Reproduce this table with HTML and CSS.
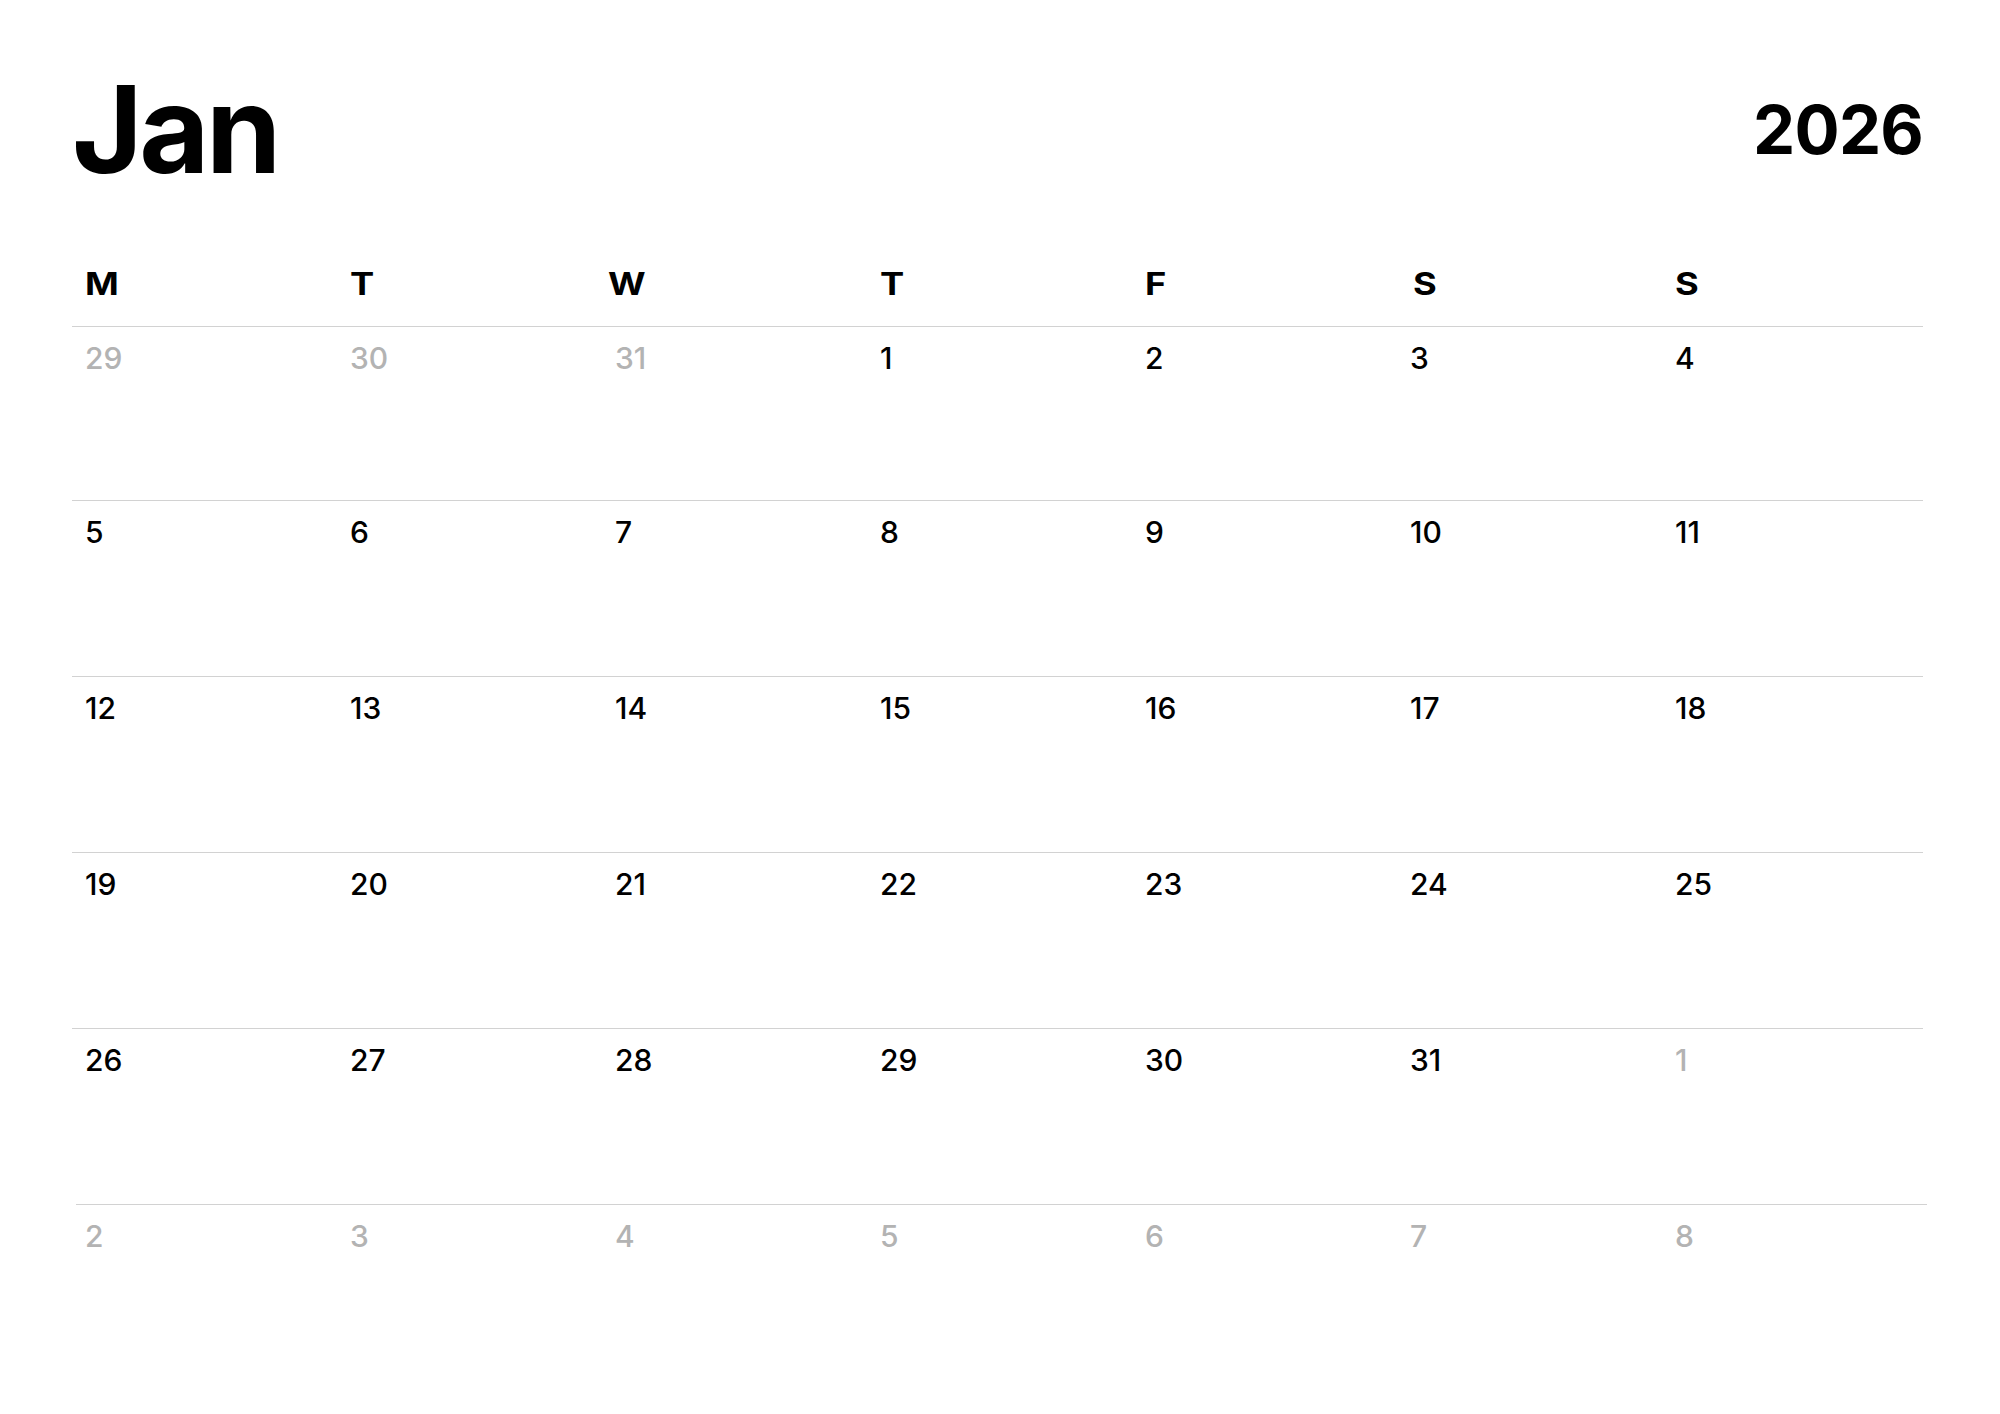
FILE: index.html
```html
<!DOCTYPE html>
<html lang="en">
<head>
<meta charset="utf-8">
<title>Jan 2026</title>
<link rel="stylesheet" href="styles.css">
</head>
<body>
<main class="page">
  <header class="top">
    <h1 class="month">Jan</h1>
    <div class="year">2026</div>
  </header>
  <div class="weekdays">
    <div class="wd"><span>M</span></div><div class="wd"><span>T</span></div><div class="wd nudge-left"><span>W</span></div><div class="wd"><span>T</span></div><div class="wd"><span>F</span></div><div class="wd nudge-right"><span>S</span></div><div class="wd"><span>S</span></div>
  </div>
  <div class="week first">
    <div class="day muted">29</div><div class="day muted">30</div><div class="day muted">31</div><div class="day">1</div><div class="day">2</div><div class="day">3</div><div class="day">4</div>
  </div>
  <div class="week">
    <div class="day">5</div><div class="day">6</div><div class="day">7</div><div class="day">8</div><div class="day">9</div><div class="day">10</div><div class="day">11</div>
  </div>
  <div class="week">
    <div class="day">12</div><div class="day">13</div><div class="day">14</div><div class="day">15</div><div class="day">16</div><div class="day">17</div><div class="day">18</div>
  </div>
  <div class="week">
    <div class="day">19</div><div class="day">20</div><div class="day">21</div><div class="day">22</div><div class="day">23</div><div class="day">24</div><div class="day">25</div>
  </div>
  <div class="week shifted">
    <div class="day">26</div><div class="day">27</div><div class="day">28</div><div class="day">29</div><div class="day">30</div><div class="day">31</div><div class="day muted">1</div>
  </div>
  <div class="week last">
    <div class="day muted">2</div><div class="day muted">3</div><div class="day muted">4</div><div class="day muted">5</div><div class="day muted">6</div><div class="day muted">7</div><div class="day muted">8</div>
  </div>
</main>
</body>
</html>
```

FILE: styles.css
```css
html, body {
  margin: 0;
  padding: 0;
  background: #ffffff;
}

body {
  font-family: Inter, "Liberation Sans", sans-serif;
  color: #000000;
  width: 2000px;
  height: 1414px;
  overflow: hidden;
}

.page {
  width: 1851px;
  padding: 69px 0 0 72px;
}

.top {
  display: flex;
  justify-content: space-between;
  align-items: flex-start;
}

.month {
  margin: 0;
  font-size: 121px;
  line-height: 1;
  font-weight: 700;
  letter-spacing: -3.5px;
}

.year {
  margin-top: 27px;
  font-size: 67px;
  line-height: 1;
  font-weight: 700;
  letter-spacing: -0.8px;
}

.weekdays {
  display: grid;
  grid-template-columns: repeat(7, 265px);
  margin-top: 78px;
  padding-bottom: 27px;
  border-bottom: 1px solid #d2d2d2;
}

.wd {
  padding-left: 13px;
  font-size: 31px;
  line-height: 1;
  font-weight: 700;
}

.wd span {
  display: inline-block;
  transform: scaleX(1.17);
  transform-origin: left center;
}

.wd.nudge-left {
  padding-left: 6px;
}

.wd.nudge-right {
  padding-left: 16px;
}

.week {
  position: relative;
  display: grid;
  grid-template-columns: repeat(7, 265px);
  height: 175px;
  border-bottom: 1px solid #d2d2d2;
}

.week.first {
  height: 173px;
}

.week.shifted {
  border-bottom: none;
  height: 176px;
}

.week.shifted::after {
  content: "";
  position: absolute;
  left: 4px;
  right: -4px;
  bottom: 0;
  height: 1px;
  background: #d2d2d2;
}

.week.last {
  border-bottom: none;
}

.day {
  padding: 16px 0 0 13px;
  font-size: 30px;
  line-height: 1;
  font-weight: 500;
}

.day.muted {
  color: #b3b3b3;
}
```
